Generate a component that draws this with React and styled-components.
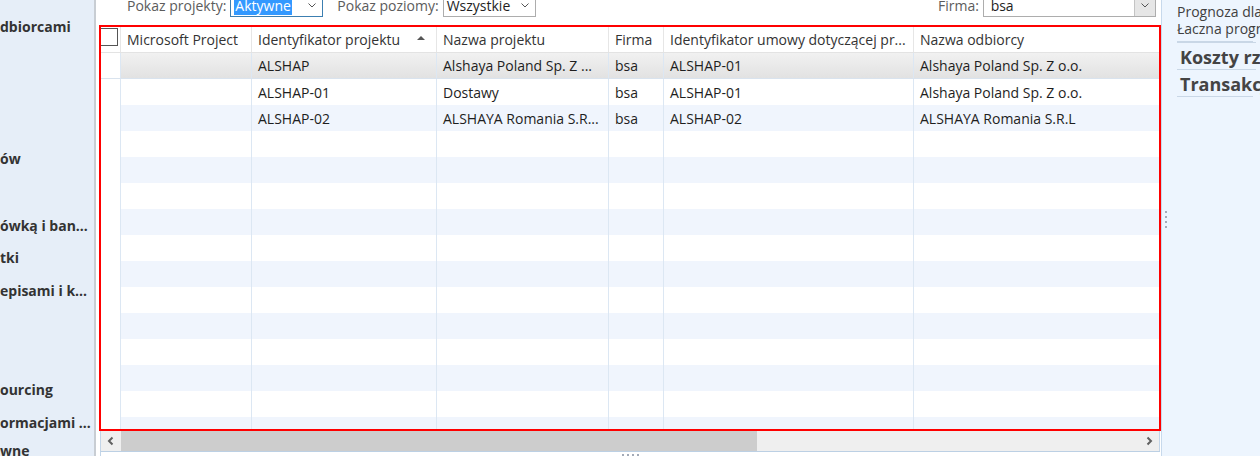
import React from "react";
import styled, { createGlobalStyle } from "styled-components";

const GlobalStyle = createGlobalStyle`
  html, body {
    margin: 0;
    padding: 0;
    background: #ffffff;
    font-family: "Open Sans", "Noto Sans", sans-serif;
    color: #333333;
  }
`;

const Page = styled.div`
  display: flex;
  width: 1260px;
  height: 456px;
  overflow: hidden;
  background: #ffffff;
`;

const Sidebar = styled.nav`
  flex: 0 0 94px;
  background: #e6eef8;
  border-right: 2px solid #c8cdd3;
  display: flex;
  flex-direction: column;
  overflow: hidden;
`;

const NavItem = styled.div`
  margin-top: ${(p) => p.$top}px;
  height: 20px;
  line-height: 20px;
  font-size: 14px;
  font-weight: 700;
  color: #333333;
  white-space: nowrap;
`;

const Main = styled.main`
  flex: 0 0 1065px;
  display: flex;
  flex-direction: column;
  padding-left: 3px;
  box-sizing: border-box;
`;

const Toolbar = styled.div`
  display: flex;
  align-items: center;
  height: 24px;
  margin-top: -7px;
  padding-left: 28px;
  font-size: 14px;
`;

const Label = styled.span`
  color: #5c5c5c;
  margin-right: 4px;
  margin-left: ${(p) => p.$gap || 0}px;
  white-space: nowrap;
`;

const Combo = styled.div`
  display: flex;
  align-items: center;
  box-sizing: border-box;
  width: ${(p) => p.$w}px;
  height: 24px;
  border: 1px solid ${(p) => (p.$focus ? "#3c7fb1" : "#adadad")};
  background: #ffffff;
  padding-left: 3px;
  color: #1e1e1e;
`;

const ComboText = styled.span`
  flex: 1;
  white-space: nowrap;
  span {
    background: #3399ff;
    color: #ffffff;
    padding: 0 1px;
  }
`;

const ComboButton = styled.div`
  flex: 0 0 20px;
  align-self: stretch;
  display: flex;
  align-items: center;
  justify-content: center;
  background: ${(p) => (p.$boxed ? "#e6e6e6" : "transparent")};
  border-left: ${(p) => (p.$boxed ? "1px solid #c4c4c4" : "none")};
`;

const Spacer = styled.div`
  flex: 1;
`;

const Frame = styled.div`
  margin-top: 8px;
  width: 1062px;
  height: 407px;
  box-sizing: border-box;
  border: 2px solid #ff0000;
  overflow: hidden;
`;

const GridRow = styled.div`
  display: grid;
  grid-template-columns: 20px 131px 185px 172px 55px 250px 1fr;
  height: 26px;
  box-sizing: border-box;
  background: ${(p) =>
    p.$head
      ? "#ffffff"
      : p.$selected
      ? "linear-gradient(#f1f1f1, #e2e2e2)"
      : p.$alt
      ? "#f0f5fd"
      : "#ffffff"};
  border-bottom: ${(p) =>
    p.$head ? "1px solid #e3e3e3" : p.$selected ? "1px solid #d9e3ee" : "none"};
`;

const Cell = styled.div`
  display: flex;
  align-items: center;
  padding-left: 6px;
  padding-right: 4px;
  box-sizing: border-box;
  border-right: 1px solid ${(p) => (p.$head ? "#e6e6e6" : "#dce7f3")};
  font-size: 14px;
  color: ${(p) => (p.$head ? "#333333" : "#1e1e1e")};
  white-space: nowrap;
  overflow: hidden;
  &:last-child {
    border-right: none;
  }
`;

const Selector = styled.div`
  background: #ffffff;
  border-right: 1px solid ${(p) => (p.$head ? "#e6e6e6" : "#dce7f3")};
  box-sizing: border-box;
`;

const CheckBox = styled.div`
  width: 18px;
  height: 18px;
  margin: 1px 0 0 -1px;
  box-sizing: border-box;
  border: 1px solid #555555;
  background: #ffffff;
`;

const HeadTitle = styled.span`
  flex: 1;
`;

const SortArrow = styled.span`
  width: 0;
  height: 0;
  border-left: 4px solid transparent;
  border-right: 4px solid transparent;
  border-bottom: 4px solid #555555;
  margin-right: 7px;
  margin-bottom: 3px;
`;

const ScrollBar = styled.div`
  display: flex;
  margin-left: 1px;
  width: 1060px;
  height: 20px;
  box-sizing: border-box;
  background: #efefef;
  border-left: 1px solid #c3d5e8;
  border-right: 1px solid #c3d5e8;
`;

const ScrollArrow = styled.div`
  flex: 0 0 20px;
  display: flex;
  align-items: center;
  justify-content: center;
`;

const Thumb = styled.div`
  flex: 0 0 636px;
  background: #cdcdcd;
`;

const BottomEdge = styled.div`
  margin-left: 1px;
  width: 1060px;
  flex: 1;
  box-sizing: border-box;
  border-top: 1px solid #bcd0e4;
  border-left: 1px solid #c3d5e8;
  display: flex;
  justify-content: center;
  padding-top: 2px;
  gap: 3px;
`;

const Dot = styled.span`
  width: 2px;
  height: 2px;
  background: #a3abb8;
`;

const RightPanel = styled.aside`
  flex: 1;
  display: flex;
  background: #edf5fe;
  border-left: 1px solid #c7d9ec;
  overflow: hidden;
`;

const Splitter = styled.div`
  flex: 0 0 7px;
  display: flex;
  flex-direction: column;
  align-items: center;
  justify-content: center;
  gap: 3px;
  padding-bottom: 18px;
`;

const PanelBody = styled.div`
  padding: 3px 0 0 8px;
  display: flex;
  flex-direction: column;
  white-space: nowrap;
`;

const PanelLine = styled.div`
  font-size: 14px;
  line-height: 17px;
  color: #404040;
`;

const PanelHeading = styled.div`
  width: 76px;
  font-size: 18px;
  font-weight: 700;
  color: #444444;
  line-height: 24px;
  padding-top: 2px;
  border-top: 1px solid #c9d7e6;
  padding-left: 3px;
  overflow: visible;
`;

const PanelRule = styled.div`
  width: 76px;
  margin-top: ${(p) => p.$top || 0}px;
  border-top: 1px solid #c9d7e6;
`;

const Chevron = ({ dir = "down", color = "#555555" }) => (
  <svg width="10" height="10" viewBox="0 0 10 10">
    {dir === "down" && (
      <polyline points="1.5,3.5 5,7 8.5,3.5" fill="none" stroke={color} strokeWidth="1" />
    )}
    {dir === "left" && (
      <polyline points="6.5,1.5 3,5 6.5,8.5" fill="none" stroke={color} strokeWidth="2" />
    )}
    {dir === "right" && (
      <polyline points="3.5,1.5 7,5 3.5,8.5" fill="none" stroke={color} strokeWidth="2" />
    )}
  </svg>
);

const navItems = [
  { text: "dbiorcami", top: 17 },
  { text: "ów", top: 112 },
  { text: "ówką i ban...", top: 47 },
  { text: "tki", top: 12 },
  { text: "episami i k...", top: 13 },
  { text: "ourcing", top: 79 },
  { text: "ormacjami ...", top: 13 },
  { text: "wne", top: 8 },
];

const columns = [
  "Microsoft Project",
  "Identyfikator projektu",
  "Nazwa projektu",
  "Firma",
  "Identyfikator umowy dotyczącej pr...",
  "Nazwa odbiorcy",
];

const rows = [
  ["", "ALSHAP", "Alshaya Poland Sp. Z ...", "bsa", "ALSHAP-01", "Alshaya Poland Sp. Z o.o."],
  ["", "ALSHAP-01", "Dostawy", "bsa", "ALSHAP-01", "Alshaya Poland Sp. Z o.o."],
  ["", "ALSHAP-02", "ALSHAYA Romania S.R...", "bsa", "ALSHAP-02", "ALSHAYA Romania S.R.L"],
];

const TOTAL_ROWS = 16;

export default function App() {
  const body = Array.from({ length: TOTAL_ROWS }, (_, i) => rows[i] || ["", "", "", "", "", ""]);

  return (
    <>
      <GlobalStyle />
      <Page>
        <Sidebar>
          {navItems.map((n) => (
            <NavItem key={n.text} $top={n.top}>
              {n.text}
            </NavItem>
          ))}
        </Sidebar>

        <Main>
          <Toolbar>
            <Label>Pokaz projekty:</Label>
            <Combo $w={93} $focus>
              <ComboText>
                <span>Aktywne</span>
              </ComboText>
              <ComboButton>
                <Chevron />
              </ComboButton>
            </Combo>
            <Label $gap={14}>Pokaz poziomy:</Label>
            <Combo $w={93}>
              <ComboText>Wszystkie</ComboText>
              <ComboButton>
                <Chevron />
              </ComboButton>
            </Combo>
            <Spacer />
            <Label>Firma:</Label>
            <Combo $w={173}>
              <ComboText>&nbsp;bsa</ComboText>
              <ComboButton $boxed>
                <Chevron />
              </ComboButton>
            </Combo>
            <div style={{ width: 5 }} />
          </Toolbar>

          <Frame>
            <GridRow $head>
              <Selector $head>
                <CheckBox />
              </Selector>
              {columns.map((c, i) => (
                <Cell key={c} $head>
                  <HeadTitle>{c}</HeadTitle>
                  {i === 1 && <SortArrow />}
                </Cell>
              ))}
            </GridRow>
            {body.map((r, i) => (
              <GridRow key={i} $selected={i === 0} $alt={i % 2 === 0}>
                <Selector />
                {r.map((v, j) => (
                  <Cell key={j}>{v}</Cell>
                ))}
              </GridRow>
            ))}
          </Frame>

          <ScrollBar>
            <ScrollArrow>
              <Chevron dir="left" color="#606060" />
            </ScrollArrow>
            <Thumb />
            <Spacer />
            <ScrollArrow>
              <Chevron dir="right" color="#606060" />
            </ScrollArrow>
          </ScrollBar>
          <BottomEdge>
            <Dot />
            <Dot />
            <Dot />
            <Dot />
          </BottomEdge>
        </Main>

        <RightPanel>
          <Splitter>
            <Dot />
            <Dot />
            <Dot />
            <Dot />
          </Splitter>
          <PanelBody>
            <PanelLine>Prognoza dla</PanelLine>
            <PanelLine>Łaczna progn</PanelLine>
            <PanelRule $top={4} />
            <PanelHeading>Koszty rz</PanelHeading>
            <PanelHeading>Transakcj</PanelHeading>
            <PanelRule />
          </PanelBody>
        </RightPanel>
      </Page>
    </>
  );
}
